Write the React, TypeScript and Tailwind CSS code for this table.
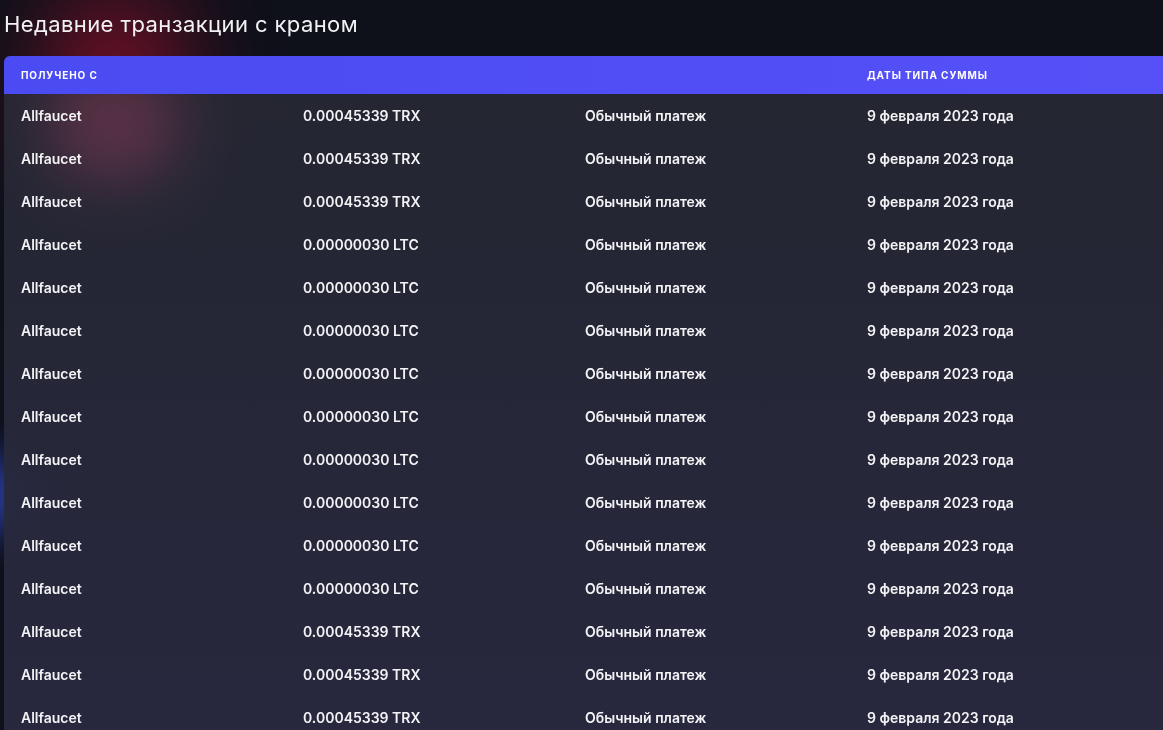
const rows = [
  { from: 'Allfaucet', amount: '0.00045339 TRX' },
  { from: 'Allfaucet', amount: '0.00045339 TRX' },
  { from: 'Allfaucet', amount: '0.00045339 TRX' },
  { from: 'Allfaucet', amount: '0.00000030 LTC' },
  { from: 'Allfaucet', amount: '0.00000030 LTC' },
  { from: 'Allfaucet', amount: '0.00000030 LTC' },
  { from: 'Allfaucet', amount: '0.00000030 LTC' },
  { from: 'Allfaucet', amount: '0.00000030 LTC' },
  { from: 'Allfaucet', amount: '0.00000030 LTC' },
  { from: 'Allfaucet', amount: '0.00000030 LTC' },
  { from: 'Allfaucet', amount: '0.00000030 LTC' },
  { from: 'Allfaucet', amount: '0.00000030 LTC' },
  { from: 'Allfaucet', amount: '0.00045339 TRX' },
  { from: 'Allfaucet', amount: '0.00045339 TRX' },
  { from: 'Allfaucet', amount: '0.00045339 TRX' },
  { from: 'Allfaucet', amount: '0.00045339 TRX' },
]

function App() {
  return (
    <div className="relative h-[730px] w-full overflow-hidden bg-[#0e101a] font-['Inter','Noto_Sans',sans-serif] text-white">
      {/* background glows */}
      <div className="pointer-events-none absolute left-[45px] top-[-10px] h-[190px] w-[140px] rounded-full bg-[#b0102e] opacity-60 blur-[45px]" />
      <div className="pointer-events-none absolute left-[-40px] top-[455px] h-[80px] w-[70px] rounded-full bg-[#3048c0] opacity-80 blur-[22px]" />

      <div className="relative pl-1 pt-[9px]">
        <h1 className="text-[22px] leading-[30px] font-normal tracking-[0.4px] text-[#f2f2f5]">
          Недавние транзакции с краном
        </h1>

        <div className="mt-[17px] w-[1190px] overflow-hidden rounded-tl-[6px] bg-gradient-to-b from-[#262833]/90 to-[#292941]/95">
          <div className="grid h-[38px] grid-cols-[282px_282px_282px_1fr] items-center bg-gradient-to-r from-[#4a4bf2] to-[#5650f7] pl-[17px] text-[10px] font-bold uppercase tracking-[0.9px] text-white">
            <div>Получено с</div>
            <div />
            <div />
            <div>Даты типа суммы</div>
          </div>
          <div className="relative overflow-hidden">
            {/* glow seen through the table */}
            <div className="pointer-events-none absolute left-[45px] top-[-25px] h-[110px] w-[130px] rounded-full bg-[#5c1628] opacity-60 blur-[30px] mix-blend-screen" />
            {rows.map((r, i) => (
              <div
                key={i}
                className="relative grid h-[43px] grid-cols-[282px_282px_282px_1fr] items-center pl-[17px] text-[14px] font-semibold text-[#f3f3f6]"
              >
                <div>{r.from}</div>
                <div>{r.amount}</div>
                <div>Обычный платеж</div>
                <div>9 февраля 2023 года</div>
              </div>
            ))}
          </div>
        </div>
      </div>
    </div>
  )
}

export default App
